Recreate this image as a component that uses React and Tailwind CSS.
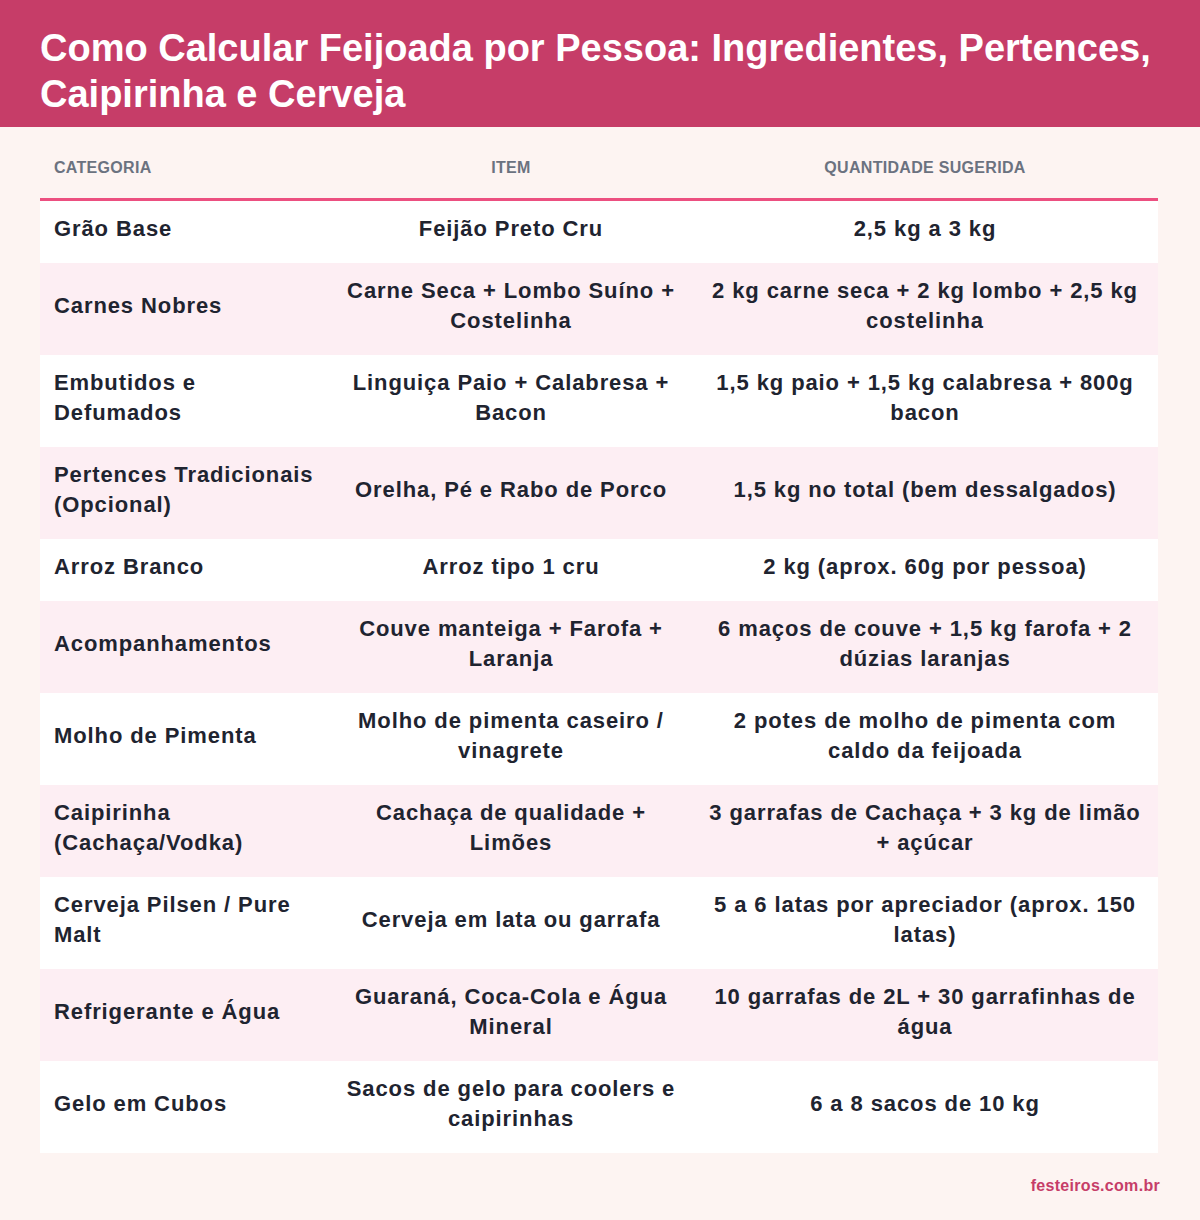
import React from 'react';

const rows = [
  ['Grão Base', 'Feijão Preto Cru', '2,5 kg a 3 kg'],
  ['Carnes Nobres', 'Carne Seca + Lombo Suíno + Costelinha', '2 kg carne seca + 2 kg lombo + 2,5 kg costelinha'],
  ['Embutidos e Defumados', 'Linguiça Paio + Calabresa + Bacon', '1,5 kg paio + 1,5 kg calabresa + 800g bacon'],
  ['Pertences Tradicionais (Opcional)', 'Orelha, Pé e Rabo de Porco', '1,5 kg no total (bem dessalgados)'],
  ['Arroz Branco', 'Arroz tipo 1 cru', '2 kg (aprox. 60g por pessoa)'],
  ['Acompanhamentos', 'Couve manteiga + Farofa + Laranja', '6 maços de couve + 1,5 kg farofa + 2 dúzias laranjas'],
  ['Molho de Pimenta', 'Molho de pimenta caseiro / vinagrete', '2 potes de molho de pimenta com caldo da feijoada'],
  ['Caipirinha (Cachaça/Vodka)', 'Cachaça de qualidade + Limões', '3 garrafas de Cachaça + 3 kg de limão + açúcar'],
  ['Cerveja Pilsen / Pure Malt', 'Cerveja em lata ou garrafa', '5 a 6 latas por apreciador (aprox. 150 latas)'],
  ['Refrigerante e Água', 'Guaraná, Coca-Cola e Água Mineral', '10 garrafas de 2L + 30 garrafinhas de água'],
  ['Gelo em Cubos', 'Sacos de gelo para coolers e caipirinhas', '6 a 8 sacos de 10 kg'],
];

export default function App() {
  return (
    <div className="w-[1200px] h-[1220px] bg-[#fdf4f2] font-['Liberation_Sans',Arial,sans-serif]">
      <header className="bg-[#c63d68] h-[127px] px-10 pt-[25px]">
        <h1 className="text-white font-bold text-[38px] leading-[46px]">
          Como Calcular Feijoada por Pessoa: Ingredientes, Pertences, Caipirinha e Cerveja
        </h1>
      </header>

      <div className="px-10">
        <table className="w-[1118px] table-fixed border-collapse">
          <colgroup>
            <col className="w-[290px]" />
            <col className="w-[362px]" />
            <col className="w-[466px]" />
          </colgroup>
          <thead>
            <tr className="border-b-[3px] border-[#ec4f80] text-[16px] leading-[24px] font-bold tracking-[0.3px] text-[#6b7280] uppercase">
              <th className="text-left px-[14px] pt-[29px] pb-[18px]">Categoria</th>
              <th className="text-center px-[14px] pt-[29px] pb-[18px]">Item</th>
              <th className="text-center px-[14px] pt-[29px] pb-[18px]">Quantidade Sugerida</th>
            </tr>
          </thead>
          <tbody className="text-[22px] leading-[30px] font-bold tracking-[0.9px] text-[#1f2430]">
            {rows.map((r, i) => (
              <tr key={i} className={i % 2 === 0 ? 'bg-white' : 'bg-[#fdeef3]'}>
                <td className="text-left px-[14px] pt-[13px] pb-[19px] align-middle">{r[0]}</td>
                <td className="text-center px-[14px] pt-[13px] pb-[19px] align-middle">{r[1]}</td>
                <td className="text-center px-[14px] pt-[13px] pb-[19px] align-middle">{r[2]}</td>
              </tr>
            ))}
          </tbody>
        </table>
        <div className="text-right pt-[21px] text-[16px] leading-[24px] font-bold tracking-[0.3px] text-[#c63d68]">festeiros.com.br</div>
      </div>
    </div>
  );
}
